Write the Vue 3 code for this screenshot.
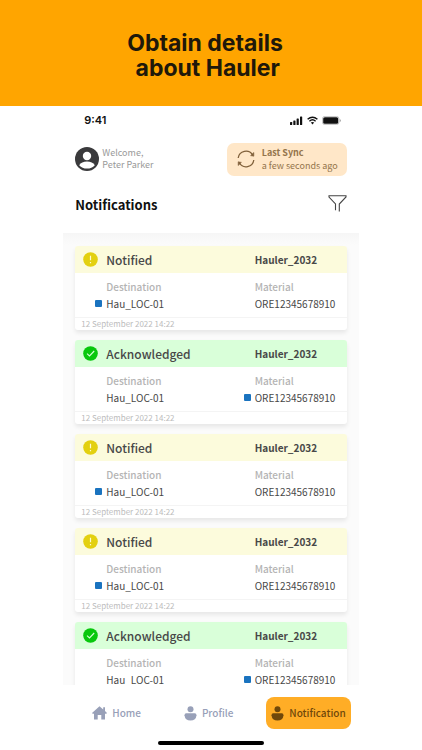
<script setup>
const items = [
  { id: 1, status: 'Notified', changed: 'destination' },
  { id: 2, status: 'Acknowledged', changed: 'material' },
  { id: 3, status: 'Notified', changed: 'destination' },
  { id: 4, status: 'Notified', changed: 'destination' },
  { id: 5, status: 'Acknowledged', changed: 'material' },
].map((item) => ({
  ...item,
  hauler: 'Hauler_2032',
  destination: 'Hau_LOC-01',
  material: 'ORE12345678910',
  date: '12 September 2022 14:22',
}))
</script>

<template>
  <div class="page">
    <header class="banner">
      <h1>Obtain details<br />&nbsp;about Hauler</h1>
    </header>

    <main class="phone">
      <div class="status-bar">
        <span class="clock">9:41</span>
        <div class="signals">
          <svg width="13" height="9" viewBox="0 0 13 9" fill="#111">
            <rect x="0" y="6" width="2.200" height="3" rx="0.6" />
            <rect x="3.300" y="4.500" width="2.200" height="4.500" rx="0.6" />
            <rect x="6.600" y="2.500" width="2.200" height="6.500" rx="0.6" />
            <rect x="10" y="0.500" width="2.200" height="8.500" rx="0.6" />
          </svg>
          <svg width="11" height="9" viewBox="0 0 11 9" fill="none" stroke="#111" stroke-width="1.400">
            <path d="M0.6 3.300Q5.500 -1 10.400 3.300M2.400 5.200Q5.500 2.500 8.600 5.200" />
            <path d="M3.800 6.600Q5.500 5.300 7.200 6.600L5.500 8.400Z" fill="#111" stroke="none" />
          </svg>
          <svg width="19" height="9" viewBox="0 0 19 9">
            <rect x="0.400" y="0.400" width="16.600" height="8.200" rx="2.500" fill="#fff" stroke="#aaa" stroke-width="0.7" />
            <rect x="1.200" y="1.200" width="15" height="6.600" rx="1.600" fill="#111" />
            <path d="M17.800 3v3q1-.5 1-1.500t-1-1.500z" fill="#999" />
          </svg>
        </div>
      </div>

      <div class="account">
        <div class="user">
          <svg width="24" height="24" viewBox="0 0 24 24">
            <circle cx="12" cy="12" r="12" fill="#3a3a3c" />
            <circle cx="12" cy="9" r="4.200" fill="#fff" />
            <path d="M4.200 18.200Q6.500 14.600 12 14.600T19.800 18.200Q16.800 21.600 12 21.600T4.200 18.200Z" fill="#fff" />
          </svg>
          <p>Welcome,<br />Peter Parker</p>
        </div>
        <button type="button" class="sync">
          <svg width="18" height="18" viewBox="0 0 18 18" fill="none" stroke="#80603a" stroke-width="1.300">
            <path d="M1.200 8A7.800 7.800 0 0 1 15.600 5M16.800 10A7.800 7.800 0 0 1 2.400 13" />
            <path d="M16.800 2.500V6.200L13.600 5.600ZM1.200 15.500V11.800L4.400 12.400Z" fill="#80603a" stroke-width="0.6" />
          </svg>
          <span class="sync-text"><strong>Last Sync</strong><span>a few seconds ago</span></span>
        </button>
      </div>

      <div class="title-row">
        <h2>Notifications</h2>
        <button type="button" class="filter" aria-label="Filter">
          <svg width="19" height="17" viewBox="0 0 19 17" fill="none" stroke="#444" stroke-width="1.100">
            <path d="M7.500 15.200V9L1 2V.8H18V2L11.300 9V16.600" />
          </svg>
        </button>
      </div>

      <section class="list">
        <article v-for="item in items" :key="item.id" class="card">
          <div class="card-head" :class="item.status.toLowerCase()">
            <svg v-if="item.status === 'Notified'" width="15" height="15" viewBox="0 0 15 15">
              <circle cx="7.500" cy="7.500" r="7.300" fill="#e3d010" />
              <path d="M7.500 3.700V8.300M7.500 9.900V11.200" stroke="#fffbd0" stroke-width="1.200" />
            </svg>
            <svg v-else width="15" height="15" viewBox="0 0 15 15">
              <circle cx="7.500" cy="7.500" r="7.300" fill="#08c80d" />
              <path d="M4 7.700L6.500 10L11.200 5" fill="none" stroke="#d6ffd6" stroke-width="1.100" />
            </svg>
            <h3>{{ item.status }}</h3>
            <strong>{{ item.hauler }}</strong>
          </div>
          <dl class="card-body">
            <div class="field">
              <dt>Destination</dt>
              <dd :class="{ changed: item.changed === 'destination' }">{{ item.destination }}</dd>
            </div>
            <div class="field">
              <dt>Material</dt>
              <dd :class="{ changed: item.changed === 'material' }">{{ item.material }}</dd>
            </div>
          </dl>
          <footer class="card-foot">{{ item.date }}</footer>
        </article>
      </section>

      <nav class="tabs">
        <a href="#home" class="tab">
          <svg width="15" height="14" viewBox="0 0 15 14" fill="currentColor">
            <path d="M7.500 0.300L11.200 3.500V1.200H13V5L15 6.900L14.300 7.700H13V13.600H9.300V9H5.700V13.600H2V7.700H.7L0 6.900Z" />
          </svg>
          Home
        </a>
        <a href="#profile" class="tab">
          <svg width="13" height="15" viewBox="0 0 13 15" fill="currentColor">
            <circle cx="6.500" cy="3.200" r="3" />
            <path d="M2.200 7.300H10.800Q12.500 7.300 12.500 9.200Q12 14.500 6.500 14.500T.5 9.200Q.5 7.300 2.200 7.300Z" />
          </svg>
          Profile
        </a>
        <a href="#notification" class="tab active" aria-current="page">
          <svg width="13" height="15" viewBox="0 0 13 15" fill="currentColor">
            <circle cx="6.500" cy="3.200" r="3" />
            <path d="M2.200 7.300H10.800Q12.500 7.300 12.500 9.200Q12 14.500 6.500 14.500T.5 9.200Q.5 7.300 2.200 7.300Z" />
          </svg>
          Notification
        </a>
      </nav>
      <div class="home-bar"></div>
    </main>
  </div>
</template>

<style>
body {
  background: #fff;
}
</style>

<style scoped>
.page {
  display: flex;
  flex-direction: column;
  height: 100vh;
  font-family: "Noto Sans CJK SC", "Noto Sans", sans-serif;
  color: #484848;
}
h1,
h2,
h3,
p,
dl,
dd {
  margin: 0;
}
svg {
  display: block;
  flex: none;
}
button {
  border: 0;
  font-family: inherit;
  cursor: pointer;
}
.banner {
  flex: none;
  padding: 31px 28px 25px 16px;
  background: #ffa500;
  text-align: center;
}
h1 {
  font-family: Inter, Roboto, sans-serif;
  font-size: 23px;
  font-weight: 700;
  line-height: 25px;
  color: #20180a;
}
.phone {
  display: flex;
  flex-direction: column;
  flex: 1;
  min-height: 0;
  width: 70%;
  margin: 0 auto;
}
.status-bar {
  display: flex;
  justify-content: space-between;
  align-items: center;
  padding: 6px 18px 0 21px;
}
.clock {
  font: 600 11px/16px Inter, sans-serif;
  color: #111;
}
.signals {
  display: flex;
  align-items: center;
  gap: 4px;
}
.account {
  display: flex;
  justify-content: space-between;
  align-items: center;
  padding: 15px 12px 0;
}
.user {
  display: flex;
  align-items: center;
  gap: 3px;
  padding-bottom: 2px;
  font-size: 9px;
  line-height: 12px;
  color: #999;
}
.sync {
  display: flex;
  align-items: center;
  gap: 7px;
  padding: 3px 9px 4px 10px;
  border-radius: 7px;
  background: #ffe7c8;
  color: #94754c;
  text-align: left;
  font-size: 9px;
  line-height: 13px;
}
.sync-text {
  display: flex;
  flex-direction: column;
}
.title-row {
  display: flex;
  justify-content: space-between;
  align-items: center;
  padding: 19px 12px 18px;
}
h2 {
  font-size: 13px;
  font-weight: 700;
  line-height: 20px;
  color: #111;
}
.filter {
  padding: 0 0 3px;
  background: none;
}
.list {
  display: flex;
  flex-direction: column;
  gap: 10px;
  flex: 1;
  min-height: 0;
  overflow-y: auto;
  scrollbar-width: none;
  padding: 13px 12px 0;
  background: linear-gradient(#f6f6f6, #fbfbfb 12px);
}
.card {
  flex: none;
  border-radius: 3px;
  background: #fff;
  box-shadow: 0 3px 4px rgba(0, 0, 0, 0.08);
}
.card-head,
.card-body {
  display: grid;
  grid-template-columns: 31px 1fr 92px;
  align-items: center;
}
.card-head {
  height: 27px;
  border-radius: 3px 3px 0 0;
}
.card-head svg {
  margin-left: 8px;
}
.notified {
  background: #fcfbdc;
}
.acknowledged {
  background: #d9ffd9;
}
h3 {
  font-size: 12px;
  font-weight: 500;
  line-height: 20px;
}
.card-head strong {
  font-size: 10px;
  line-height: 16px;
}
.card-body {
  padding: 5px 0;
}
.field:first-child {
  grid-column: 2;
}
dt,
dd {
  font-size: 10px;
  line-height: 17px;
  white-space: nowrap;
}
dt {
  font-weight: 500;
  color: #b4b4b4;
}
dd {
  position: relative;
}
.changed::before {
  content: "";
  position: absolute;
  top: 5px;
  left: -11px;
  width: 7px;
  height: 7px;
  border-radius: 1px;
  background: #1a73bf;
}
.card-foot {
  padding-left: 6px;
  border-top: 1px solid #f4f4f4;
  font-size: 8px;
  line-height: 12px;
  color: #bcbcbc;
}
.tabs {
  display: flex;
  justify-content: space-between;
  align-items: center;
  padding: 12px 8px 12px 19px;
}
.tab {
  display: flex;
  align-items: center;
  gap: 5px;
  padding: 8px 7px 8px 10px;
  border-radius: 8px;
  font-size: 10px;
  font-weight: 500;
  line-height: 16px;
  color: #98a0b8;
  text-decoration: none;
}
.active {
  padding: 8px 5px;
  background: #ffad26;
  color: #70480a;
}
.home-bar {
  width: 36%;
  height: 4px;
  margin: 0 auto 5px;
  border-radius: 2px;
  background: #000;
}
</style>
